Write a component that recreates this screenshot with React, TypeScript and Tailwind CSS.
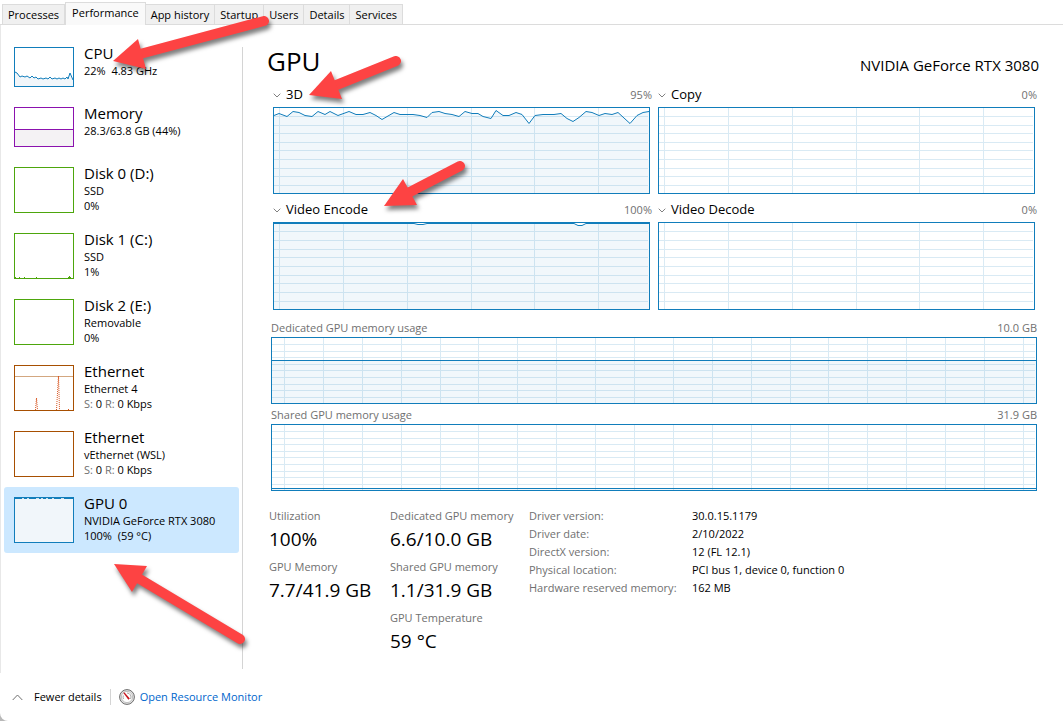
import type { ReactNode } from 'react';

const TABS = ['Processes', 'Performance', 'App history', 'Startup', 'Users', 'Details', 'Services'];

const LOAD_3D =
  '1,8 6,6 14,9 20,4 26,5 32,8 39,9 45,4 52,7 57,4 65,8 76,4 83,7 90,7 97,5 103,8 109,12 121,5 127,7 140,7 147,8 154,10 159,5 166,4 172,6 179,7 186,9 192,4 199,6 205,6 210,9 218,11 223,3 230,8 236,8 243,5 249,7 256,16 262,8 270,7 281,7 288,6 294,11 300,14 306,10 313,4 319,5 326,8 332,6 339,7 345,5 357,16 364,8 370,5 376,4';

const LOAD_ENCODE = '1,1 141,1 145,2 150,2 154,1 301,1 305,3 309,3 313,1 376,1';

const LOAD_CPU =
  '1,25 3,26 6,30 8,29 11,30 13,29 16,31 18,29 20,31 22,30 24,32 27,31 29,32 32,31 34,32 36,30 38,32 41,31 43,32 45,31 47,32 49,31 51,32 53,30 54,32 56,26 59,33';

interface ChartProps {
  width: number;
  height: number;
  firstColumn: number;
  columnStep: number;
  points?: string;
  className: string;
}

function Chart({ width, height, firstColumn, columnStep, points, className }: ChartProps) {
  const columns: number[] = [];
  for (let x = firstColumn; x < width - 1; x += columnStep) {
    columns.push(Math.round(x));
  }
  const rows = [1, 2, 3, 4, 5, 6, 7, 8, 9].map((k) => Math.round((k * (height - 1)) / 10 + 0.4));

  return (
    <svg viewBox={`0 0 ${width} ${height}`} preserveAspectRatio="none" className={className}>
      <g fill="#d9eaf4" shapeRendering="crispEdges">
        {columns.map((x) => (
          <rect key={x} x={x} y={0} width={1} height={height} />
        ))}
        {rows.map((y) => (
          <rect key={y} x={0} y={y} width={width - 2} height={1} />
        ))}
      </g>
      {points && (
        <g transform="translate(0 0.5)">
          <polygon points={`1,${height} ${points} ${width - 1},${height}`} fill="#117dbb" fillOpacity={0.06} />
          <polyline points={points} fill="none" stroke="#117dbb" />
        </g>
      )}
      <rect
        x={0.5}
        y={0.5}
        width={width - 1}
        height={height - 1}
        fill="none"
        stroke="#117dbb"
        shapeRendering="crispEdges"
      />
    </svg>
  );
}

interface EngineProps {
  name: string;
  usage: string;
  height: number;
  points?: string;
  className: string;
}

function Engine({ name, usage, height, points, className }: EngineProps) {
  return (
    <div>
      <div className="-mr-[2px] flex h-[26px] items-center justify-between pt-[2px]">
        <button type="button" className="flex items-center gap-[5px] text-[13px]">
          <svg width={8} height={5} viewBox="0 0 8 5">
            <path d="M0.7 0.7L4 4L7.3 0.7" fill="none" stroke="#808080" />
          </svg>
          {name}
        </button>
        <span className="text-[11px] text-[#707070]">{usage}</span>
      </div>
      <Chart
        width={377}
        height={height}
        firstColumn={6.2}
        columnStep={63.8}
        points={points}
        className={className}
      />
    </div>
  );
}

interface MemoryProps {
  name: string;
  total: string;
  points: string;
}

function MemoryChart({ name, total, points }: MemoryProps) {
  return (
    <div>
      <div className="flex h-5 items-center justify-between pt-[2px] text-[11px] text-[#707070]">
        <span>{name}</span>
        <span>{total}</span>
      </div>
      <Chart
        width={766}
        height={67}
        firstColumn={12.9}
        columnStep={38.9}
        points={points}
        className="block h-[67px] w-full"
      />
    </div>
  );
}

interface DeviceProps {
  title: string;
  lines: ReactNode[];
  color: string;
  short?: boolean;
  active?: boolean;
  children?: ReactNode;
}

function Device({ title, lines, color, short, active, children }: DeviceProps) {
  const height = short ? 40 : 46;
  return (
    <li>
      <button
        type="button"
        className={`flex w-full items-start gap-[10px] rounded-[3px] p-[10px] text-left ${active ? 'bg-[#cce8ff]' : ''}`}
      >
        <svg width={60} height={height} className="shrink-0">
          <rect x={0.5} y={0.5} width={59} height={height - 1} fill="#fff" stroke={color} />
          {children}
        </svg>
        <span className="-my-1 flex flex-col">
          <span className="text-[15px] leading-5">{title}</span>
          {lines.map((line, i) => (
            <span key={i} className="text-[11px] leading-[15px] whitespace-pre">
              {line}
            </span>
          ))}
        </span>
      </button>
    </li>
  );
}

const NetworkRate = () => (
  <>
    <span className="text-[#707070]">S:</span> 0 <span className="text-[#707070]">R:</span> 0 Kbps
  </>
);

function Stat({ label, value }: { label: string; value: string }) {
  return (
    <div className="flex h-[51px] flex-col">
      <dt className="text-[11px] leading-5 text-[#707070]">{label}</dt>
      <dd className="text-[19px] leading-[26px]">{value}</dd>
    </div>
  );
}

const DETAILS = [
  ['Driver version:', '30.0.15.1179'],
  ['Driver date:', '2/10/2022'],
  ['DirectX version:', '12 (FL 12.1)'],
  ['Physical location:', 'PCI bus 1, device 0, function 0'],
  ['Hardware reserved memory:', '162 MB'],
];

// Each arrow: head polygon plus the shaft from head to tail
const ARROWS = [
  { head: '113,61 138,39 146,69', shaft: 'M140 54L264 21' },
  { head: '309,95 331,71 342,99', shaft: 'M334 86L396 61' },
  { head: '384,206 403,179 417,205', shaft: 'M408 193L460 166' },
  { head: '114,564 147,566 132,592', shaft: 'M138 578L240 639' },
];

export default function App() {
  return (
    <div className="bg-[#b8b8b8]">
      <div className="relative flex min-h-screen flex-col overflow-hidden rounded-bl-[8px] bg-white font-['Open_Sans','Noto_Sans',sans-serif] text-[11px] text-black">
        <nav className="flex h-[25px] items-end border-b border-[#dcdcdc] pl-[2px]">
          {TABS.map((tab) => (
            <button
              key={tab}
              type="button"
              className={
                tab === 'Performance'
                  ? '-mb-px h-[23px] border border-b-0 border-[#dcdcdc] bg-[#f9f9f9] px-[6px] pb-[2px]'
                  : 'h-[20px] border-t border-r border-[#dcdcdc] bg-[#f0f0f0] px-[5px] pt-px first:border-l'
              }
            >
              {tab}
            </button>
          ))}
        </nav>

        <div className="flex flex-1 border-l border-[#e8e8e8]">
          <aside className="mt-[22px] mb-1 w-[242px] shrink-0 border-r border-[#d4d4d4] pr-[3px] pl-[3px]">
            <ul className="-mt-[10px]">
              <Device title="CPU" lines={['22%  4.83 GHz']} color="#117dbb" short>
                <polygon points={`1,39 ${LOAD_CPU} 59,39`} fill="#f1f6fa" />
                <polyline points={LOAD_CPU} fill="none" stroke="#117dbb" />
              </Device>
              <Device title="Memory" lines={['28.3/63.8 GB (44%)']} color="#8b12ae" short>
                <path d="M1 23h58v16H1z" fill="#f4f2f4" />
                <path d="M1 22.5h58" stroke="#8b12ae" />
              </Device>
              <Device title="Disk 0 (D:)" lines={['SSD', '0%']} color="#4da60c" />
              <Device title="Disk 1 (C:)" lines={['SSD', '1%']} color="#4da60c">
                <path d="M1 44.5h1M5 44.5h1M10 44.5h1M22 44.5h1M54 44.5h3M55.5 43v2" stroke="#4da60c" />
              </Device>
              <Device title="Disk 2 (E:)" lines={['Removable', '0%']} color="#4da60c" />
              <Device title="Ethernet" lines={['Ethernet 4', <NetworkRate />]} color="#a74f01">
                <path d="M1 11.5h58" stroke="#d3a780" />
                <path
                  d="M21.5 45L22.5 33L23.5 45M42.5 45L44.5 11L45.5 45M54 44.5h1"
                  fill="none"
                  stroke="#d9541e"
                  strokeDasharray="1 1"
                />
              </Device>
              <Device title="Ethernet" lines={['vEthernet (WSL)', <NetworkRate />]} color="#a74f01" />
              <Device
                title="GPU 0"
                lines={['NVIDIA GeForce RTX 3080', '100%  (59 °C)']}
                color="#117dbb"
                active
              >
                <path d="M1 1h58v44H1z" fill="#f1f6fa" />
                <path d="M1 1.5h58" stroke="#117dbb" />
                <path d="M8 1.5h2M13 1.5h2M22 1.5h3M27 1.5h2M32 1.5h2M38 1.5h2M47 1.5h3" stroke="#cde3f0" />
              </Device>
            </ul>
          </aside>

          <main className="min-w-0 flex-1 pr-[26px] pl-7">
            <header className="-ml-1 flex h-[56px] items-end justify-between pb-[2px]">
              <h1 className="text-[26px] leading-9">GPU</h1>
              <p className="-mr-[2px] text-[15px] leading-7">NVIDIA GeForce RTX 3080</p>
            </header>

            <div className="grid grid-cols-2 gap-x-2 gap-y-[2px] px-[2px]">
              <Engine name="3D" usage="95%" height={87} points={LOAD_3D} className="block h-[87px] w-full" />
              <Engine name="Copy" usage="0%" height={87} className="block h-[87px] w-full" />
              <Engine name="Video Encode" usage="100%" height={88} points={LOAD_ENCODE} className="block h-[88px] w-full" />
              <Engine name="Video Decode" usage="0%" height={88} className="block h-[88px] w-full" />
            </div>

            <div className="mt-[7px] flex flex-col">
              <MemoryChart name="Dedicated GPU memory usage" total="10.0 GB" points="1,23 765,23" />
              <MemoryChart name="Shared GPU memory usage" total="31.9 GB" points="1,64 765,64" />
            </div>

            <div className="mt-[15px] -ml-[2px] flex">
              <dl className="w-[121px]">
                <Stat label="Utilization" value="100%" />
                <Stat label="GPU Memory" value="7.7/41.9 GB" />
              </dl>
              <dl className="w-[139px]">
                <Stat label="Dedicated GPU memory" value="6.6/10.0 GB" />
                <Stat label="Shared GPU memory" value="1.1/31.9 GB" />
                <Stat label="GPU Temperature" value="59 °C" />
              </dl>
              <table className="mt-px self-start text-left leading-[18px]">
                <tbody>
                  {DETAILS.map(([label, value]) => (
                    <tr key={label}>
                      <th scope="row" className="w-[163px] font-normal text-[#707070]">
                        {label}
                      </th>
                      <td>{value}</td>
                    </tr>
                  ))}
                </tbody>
              </table>
            </div>
          </main>
        </div>

        <footer className="flex h-12 items-center pl-3">
          <button type="button" className="flex items-center gap-[11px]">
            <svg width={11} height={7} viewBox="0 0 11 7">
              <path d="M0.7 6L5.5 1L10.3 6" fill="none" stroke="#707070" />
            </svg>
            Fewer details
          </button>
          <span className="mx-2 h-4 w-px bg-[#d4d4d4]" />
          <a href="#resource-monitor" className="flex items-center gap-[5px] text-[#0066cc]">
            <svg width={16} height={16} viewBox="0 0 16 16">
              <circle cx={8} cy={8} r={7.4} fill="#e4e4e4" stroke="#6b6b6b" />
              <circle cx={8} cy={8} r={5.6} fill="#fff" stroke="#b4b4b4" strokeWidth={0.8} />
              <path d="M4.5 10A4 4 0 0 1 4.4 6.5M8 4A4 4 0 0 1 11.5 10" fill="none" stroke="#a8a8a8" />
              <path d="M4.2 3.8L5.6 3.6L10.8 9.6L9.4 10.8Z" fill="#c8141c" />
            </svg>
            Open Resource Monitor
          </a>
        </footer>

        <svg className="pointer-events-none absolute inset-0 h-full w-full">
          {ARROWS.map(({ head, shaft }) => (
            <g key={head} className="drop-shadow-[2px_4px_2px_rgba(0,0,0,0.5)]">
              <path d={shaft} fill="none" stroke="#fd4343" strokeWidth={10} strokeLinecap="round" />
              <polygon points={head} fill="#fd4343" />
            </g>
          ))}
        </svg>
      </div>
    </div>
  );
}
